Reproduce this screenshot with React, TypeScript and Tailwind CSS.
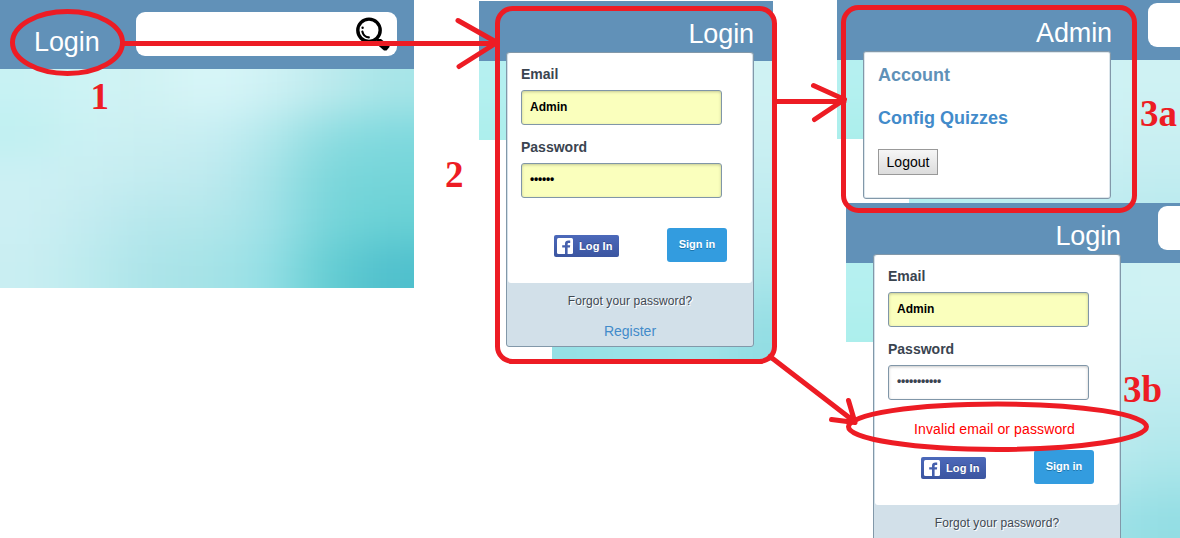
import React from "react";

const HOME_TONES = [
  ["#c8f2f3", "#cef3f4", "#d0f2f3", "#d8f6f8", "#d0f2f5", "#bfebee", "#a8e5e8"],
  ["#bff0f2", "#ccf1f3", "#caeff2", "#c8eef3", "#b6e9ed", "#90dde1", "#80d9de"],
  ["#cdf0f3", "#c9eef2", "#c3ecf0", "#bfeaef", "#a8e4e9", "#7dd7db", "#74d5d9"],
  ["#cceff3", "#c2ebf0", "#b5e7ec", "#b3e7eb", "#a2e2e8", "#78d5da", "#69d1d5"],
  ["#c9eef2", "#bcebee", "#ace4e9", "#a6e3e7", "#96e0e6", "#66ced3", "#50c0cd"],
];

const PANEL_TONES = [
  ["#b5f0f0", "#b6f0ee", "#c4f2f1", "#cbf2f3", "#cdf2f4", "#cff2f3"],
  ["#a9eeeb", "#aaeeec", "#bcf1f0", "#c8f0f3", "#cbf0f3", "#c9eff2"],
  ["#b4efef", "#b4eeee", "#bcefef", "#c0edf1", "#c2edf1", "#bdebef"],
  ["#b0ecee", "#aeeaec", "#ade8ec", "#b0e8ec", "#bce9ee", "#aee7eb"],
  ["#96e0e6", "#94e0e5", "#98e1e6", "#9ce3e8", "#a3e3e9", "#92dde3"],
];

function Backdrop({ tones, id, className }: { tones: string[][]; id: string; className: string }) {
  const rows = tones.length;
  const cols = tones[0].length;
  return (
    <svg
      className={className}
      viewBox={`0 0 ${cols * 10} ${rows * 10}`}
      preserveAspectRatio="none"
      aria-hidden="true"
    >
      <filter id={id} x="-20%" y="-20%" width="140%" height="140%" colorInterpolationFilters="sRGB">
        <feGaussianBlur stdDeviation="4.5" />
      </filter>
      <g filter={`url(#${id})`}>
        {tones.map((row, r) =>
          row.map((fill, c) => {
            const left = c === 0 ? -20 : c * 10;
            const top = r === 0 ? -20 : r * 10;
            const right = c === cols - 1 ? cols * 10 + 20 : c * 10 + 10.2;
            const bottom = r === rows - 1 ? rows * 10 + 20 : r * 10 + 10.2;
            return <rect key={`${r}-${c}`} x={left} y={top} width={right - left} height={bottom - top} fill={fill} />;
          }),
        )}
      </g>
    </svg>
  );
}

function SearchIcon() {
  return (
    <svg className="h-[34px] w-[34px]" viewBox="0 0 34 34" fill="none" stroke="#000" aria-hidden="true">
      <circle cx="13" cy="13.3" r="11.2" strokeWidth="3.4" />
      <path d="M6.4 14.6a7.3 7.3 0 0 0 6.4 5.8" strokeWidth="2.2" strokeLinecap="round" />
      <circle cx="6.6" cy="10.8" r="1.2" fill="#000" stroke="none" />
      <path d="M20.5 22 25 22 33.5 29 33.5 30 30.5 33.5 28 33.5 20.5 27Z" fill="#000" stroke="none" />
    </svg>
  );
}

function Field({ label, value, filled }: { label: string; value: string; filled: boolean }) {
  const secret = label === "Password";
  return (
    <div className="flex h-[73px] flex-col">
      <span className="h-[25px] text-[14px] leading-[18px] font-bold text-[#3a4450]">{label}</span>
      <div
        className={
          "flex h-[35px] w-[201px] items-center rounded-[3px] border border-[#8096a8] pl-2 text-[12px] font-bold shadow-[inset_0_1px_3px_rgba(0,0,0,0.22)] " +
          (secret ? "pb-[3px] " : "pb-px ") +
          (filled ? "bg-[#faffbd] text-black" : "bg-white text-[#3a4450]")
        }
      >
        {secret ? <span className="tracking-[-0.2px]">{value}</span> : value}
      </div>
    </div>
  );
}

function FacebookButton() {
  return (
    <div className="mt-[7px] flex h-[22px] w-[65px] items-center rounded-[2px] bg-linear-to-b from-[#4c69ba] to-[#3b55a0] pl-[3px]">
      <svg className="h-4 w-4" viewBox="0 0 16 16" aria-hidden="true">
        <rect width="16" height="16" rx="1.5" fill="#fff" />
        <path d="M8 16V9.6H5.2V7.2H8V5.8C8 3.6 9.3 2.5 11.4 2.5H13.2V4.9H11.9C11 4.9 10.6 5.3 10.6 6.1V7.2H13.2L12.9 9.6H10.6V16Z" fill="#4560ad" />
      </svg>
      <span className="ml-[6px] text-[11px] leading-none font-bold tracking-[0.1px] whitespace-nowrap text-white [text-shadow:0_-1px_0_#354c8c]">
        Log In
      </span>
    </div>
  );
}

function LoginCard({ error, filled, password }: { error?: string; filled: boolean; password: string }) {
  return (
    <div className="relative -mt-[9px] w-[248px] rounded-[3px] border border-[#8298a9] bg-[#d2e0e9]">
      <div className="mx-px rounded-[3px] bg-white pt-3 pl-[13px]">
        <Field label="Email" value="Admin" filled />
        <Field label="Password" value={password} filled={filled} />
        {error ? (
          <div className="flex h-[37px] w-[213px] justify-center pt-[6px] text-[14px] leading-5 tracking-[0.12px] whitespace-nowrap text-[#f00]">
            {error}
          </div>
        ) : (
          <div className="h-[17px]" />
        )}
        <div className="flex h-[55px] pl-[33px]">
          <FacebookButton />
          <div className="ml-12 flex h-[34px] w-[60px] items-center justify-center rounded-[3px] bg-[#339cdf] pb-px text-[11px] font-bold text-white [text-shadow:0_1px_0_#1c76ad]">
            Sign in
          </div>
        </div>
      </div>
      <div className="flex h-[63px] flex-col items-center pt-[9px]">
        <span className="text-[12px] leading-[18px] tracking-[0.08px] text-[#3f4852] [text-shadow:1px_1px_0_#fff]">
          Forgot your password?
        </span>
        {!error && <span className="mt-[11px] text-[14px] leading-5 text-[#428bca]">Register</span>}
      </div>
    </div>
  );
}

function AccountCard() {
  return (
    <div className="relative -mt-[9px] flex h-[148px] w-[248px] flex-col items-start rounded-[3px] border border-[#8298a9] bg-white pt-3 pl-[14px] text-[18px] leading-[22px] font-bold shadow-[inset_0_0_0_1px_#dce6ec]">
      <span className="text-[#5f91b8]">Account</span>
      <span className="mt-[21px] text-[#428bca]">Config Quizzes</span>
      <div className="mt-5 flex h-[26px] w-[60px] items-center justify-center border border-[#999] bg-linear-to-b from-[#f6f6f6] to-[#dcdcdc] text-[14px] font-normal text-black">
        Logout
      </div>
    </div>
  );
}

function Annotations() {
  return (
    <svg
      className="pointer-events-none absolute inset-0 h-[538px] w-[1180px]"
      viewBox="0 0 1180 538"
      fill="none"
      stroke="#ed1c24"
      strokeWidth="5"
      strokeLinecap="round"
      strokeLinejoin="round"
    >
      <ellipse cx="67.5" cy="42.5" rx="55" ry="31" />
      <path d="M124 43.5H497M458 20.5 497 42.5 459 66.5" />
      <rect x="497.5" y="8.5" width="277" height="353" rx="15" />
      <path d="M776 101.5H844M813.5 85.5 844.5 99.5 814.5 119.5" />
      <rect x="843.5" y="7.5" width="291" height="203" rx="15" />
      <path d="M770 356.5 855 422M848.5 400.5 855 422.5 831.5 419.5" />
      <ellipse cx="997.5" cy="426.7" rx="149" ry="22.7" />
      <g fill="#ed1c24" stroke="none" fontFamily="'Liberation Serif', serif" fontWeight="700" fontSize="37">
        <text x="90.5" y="109">1</text>
        <text x="445" y="187">2</text>
        <text x="1140" y="126">3a</text>
        <text x="1123" y="402">3b</text>
      </g>
    </svg>
  );
}

function TopBar({ title, search }: { title: string; search?: "wide" | "narrow" }) {
  return (
    <div className="relative flex h-[60px] shrink-0 justify-between bg-[#6191b8]">
      <span className="w-[275px] pt-4 text-right text-[27px] leading-[34px] tracking-[-0.1px] text-white">{title}</span>
      {search && (
        <div className={"mt-[3px] h-11 rounded-l-[9px] bg-white " + (search === "wide" ? "w-8" : "w-[22px]")} />
      )}
    </div>
  );
}

export default function App() {
  return (
    <main className="relative flex h-[538px] w-[1180px] items-start overflow-hidden bg-white font-['Liberation_Sans',sans-serif]">
      <section className="flex h-[288px] w-[414px] shrink-0 flex-col">
        <div className="flex h-[69px] items-start bg-[#6191b8] pt-3">
          <span className="w-[136px] pt-[13px] pl-[34px] text-[27px] leading-[34px] tracking-[-0.1px] text-white">Login</span>
          <div className="flex h-11 w-[261px] justify-end rounded-[9px] bg-white pt-[5px] pr-[7px]">
            <SearchIcon />
          </div>
        </div>
        <Backdrop tones={HOME_TONES} id="home-soft" className="h-[219px] w-full" />
      </section>

      <section className="relative mt-px ml-[65px] h-[360px] w-[294px] shrink-0">
        <Backdrop
          tones={PANEL_TONES}
          id="login-soft"
          className="absolute inset-0 top-[60px] h-[300px] w-full [clip-path:polygon(0_0,100%_0,100%_100%,73px_100%,73px_79px,0_79px)]"
        />
        <TopBar title="Login" />
        <div className="ml-[27px]">
          <LoginCard filled password="••••••" />
        </div>
      </section>

      <div className="ml-16 flex w-[343px] shrink-0 flex-col">
        <section className="relative h-[203px] overflow-hidden">
          <Backdrop
            tones={PANEL_TONES}
            id="account-soft"
            className="absolute inset-0 top-[60px] h-[280px] w-full [clip-path:polygon(0_0,100%_0,100%_100%,72px_100%,72px_79px,0_79px)]"
          />
          <TopBar title="Admin" search="wide" />
          <div className="ml-[26px]">
            <AccountCard />
          </div>
        </section>
        <section className="relative ml-[9px] h-[335px] overflow-hidden">
          <Backdrop
            tones={PANEL_TONES}
            id="error-soft"
            className="absolute inset-0 top-[60px] h-[285px] w-full [clip-path:polygon(0_0,100%_0,100%_100%,72px_100%,72px_79px,0_79px)]"
          />
          <TopBar title="Login" search="narrow" />
          <div className="ml-[27px]">
            <LoginCard filled={false} password="•••••••••••" error="Invalid email or password" />
          </div>
        </section>
      </div>
      <Annotations />
    </main>
  );
}
